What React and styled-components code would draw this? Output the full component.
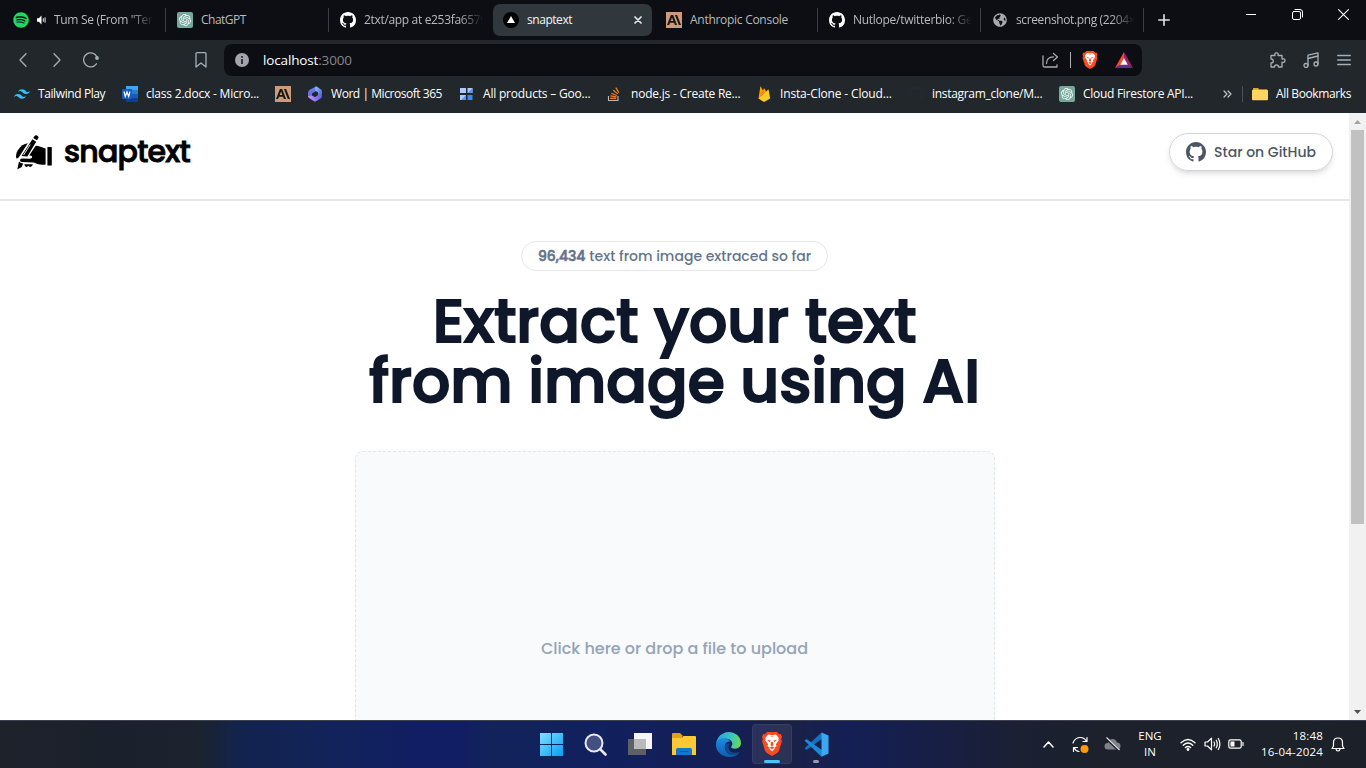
import React from "react";
import styled, { createGlobalStyle, css } from "styled-components";
import { FaSpotify, FaGlobeAmericas } from "react-icons/fa";
import { SiOpenai, SiTailwindcss, SiAnthropic } from "react-icons/si";

const Global = createGlobalStyle`
  * { box-sizing: border-box; }
  html, body { margin: 0; height: 100%; overflow: hidden; background: #fff; }
  svg { display: block; flex: none; }
`;

const ui = `"Segoe UI", "Open Sans", "Noto Sans", sans-serif`;
const geo = `Poppins, Inter, "Open Sans", sans-serif`;

const Screen = styled.div`
  width: 1366px;
  height: 768px;
  display: flex;
  flex-direction: column;
  overflow: hidden;
  font-family: ${ui};
`;

/* ---------- tab strip ---------- */
const TabStrip = styled.div`
  height: 40px;
  flex: none;
  display: flex;
  align-items: flex-start;
  background: #0d0e13;
  padding-left: 1px;
`;
const Tab = styled.div`
  width: ${(p) => p.$w || 163}px;
  height: 32px;
  margin-top: 4px;
  padding: 0 0 0 ${(p) => p.$pad || 12}px;
  display: flex;
  align-items: center;
  gap: ${(p) => p.$gap || 8}px;
  position: relative;
  color: ${(p) => (p.$active ? "#f4f6f7" : "#b9babd")};
  ${(p) =>
    p.$active
      ? css`
          background: #30383d;
          border-radius: 7px;
          width: 159px;
          margin-left: 2px;
          margin-right: 2px;
          padding-left: 10px;
        `
      : ""}
  ${(p) =>
    p.$line &&
    css`
      &::after {
        content: "";
        position: absolute;
        right: 0;
        top: 4px;
        width: 1px;
        height: 24px;
        background: #3b3e44;
      }
    `}
`;
const TabTitle = styled.span`
  flex: none;
  width: ${(p) => p.$w || 119}px;
  overflow: hidden;
  white-space: nowrap;
  font-size: 12px;
  line-height: 20px;
  letter-spacing: ${(p) => p.$ls ?? -0.28}px;
  ${(p) =>
    p.$fade &&
    css`
      mask-image: linear-gradient(90deg, #000 calc(100% - 24px), transparent);
    `}
`;
const NewTab = styled.div`
  width: 40px;
  height: 40px;
  display: grid;
  place-items: center;
`;
const WinButtons = styled.div`
  margin-left: auto;
  display: flex;
  height: 28px;
`;
const WinButton = styled.div`
  width: 46px;
  display: grid;
  place-items: center;
`;
const CloseTab = styled.div`
  margin-left: -20px;
`;

const Tile = styled.div`
  width: 16px;
  height: 16px;
  flex: none;
  display: grid;
  place-items: center;
  border-radius: ${(p) => p.$r || 0}px;
  background: ${(p) => p.$bg};
  color: ${(p) => p.$fg};
`;

/* ---------- toolbar ---------- */
const Toolbar = styled.div`
  height: 40px;
  flex: none;
  display: flex;
  align-items: center;
  background: #22272b;
  padding: 0 5px 0 6px;
`;
const ToolButton = styled.div`
  width: ${(p) => p.$w || 34}px;
  height: 32px;
  flex: none;
  display: grid;
  place-items: center;
`;
const Gap = styled.div`
  width: ${(p) => p.$w}px;
  flex: none;
`;
const AddressBar = styled.div`
  width: 918px;
  height: 32px;
  flex: none;
  border-radius: 8px;
  background: #0d0e13;
  display: flex;
  align-items: center;
  padding: 0 9px 0 11px;
`;
const Url = styled.div`
  margin-left: 14px;
  font-size: 13.5px;
  letter-spacing: -0.15px;
  color: #fff;
  span {
    color: #85878b;
  }
`;
const Rule = styled.div`
  width: 1px;
  height: ${(p) => p.$h}px;
  background: ${(p) => p.$c};
`;
const AddressTools = styled.div`
  margin-left: auto;
  display: flex;
  align-items: center;
`;

/* ---------- bookmarks ---------- */
const Bookmarks = styled.div`
  height: 33px;
  flex: none;
  display: flex;
  align-items: center;
  background: #22272b;
  padding: 0 0 5px 14px;
`;
const Bookmark = styled.div`
  width: ${(p) => p.$w}px;
  flex: none;
  display: flex;
  align-items: center;
  gap: 8px;
`;
const BookmarkLabel = styled.span`
  white-space: nowrap;
  font-size: 12px;
  line-height: 18px;
  color: #fff;
  letter-spacing: ${(p) => p.$ls}px;
`;

/* ---------- web page ---------- */
const Viewport = styled.div`
  height: 607px;
  flex: none;
  display: flex;
  overflow: hidden;
`;
const Page = styled.div`
  width: 1349px;
  height: 607px;
  overflow: hidden;
  display: flex;
  flex-direction: column;
  align-items: center;
  background: #fff;
  font-family: ${geo};
  font-weight: 500;
`;
const Header = styled.header`
  width: 100%;
  height: 88px;
  flex: none;
  border-bottom: 2px solid #e5e7eb;
  padding: 20px 16px 0;
  display: flex;
  justify-content: space-between;
  align-items: flex-start;
`;
const Brand = styled.div`
  display: flex;
  align-items: center;
  height: 38px;
  gap: 12px;
`;
const BrandName = styled.div`
  font-size: 30px;
  letter-spacing: -0.75px;
  line-height: 36px;
  color: #000;
  -webkit-text-stroke: 0.9px #000;
`;
const StarButton = styled.div`
  width: 164px;
  height: 38px;
  border: 1px solid #d1d5db;
  border-radius: 19px;
  box-shadow: 0 4px 6px -1px rgba(0, 0, 0, 0.1), 0 2px 4px -2px rgba(0, 0, 0, 0.1);
  display: flex;
  align-items: center;
  padding-left: 16px;
  gap: 8px;
  color: #4b5563;
  font-size: 14px;
  white-space: nowrap;
`;
const Pill = styled.div`
  margin-top: 40px;
  width: 307px;
  height: 30px;
  flex: none;
  border: 1px solid #e5e7eb;
  border-radius: 15px;
  display: flex;
  align-items: center;
  justify-content: center;
  gap: 4px;
  color: #64748b;
  font-size: 14px;
  white-space: nowrap;
  b {
    font-weight: 500;
    -webkit-text-stroke: 0.6px #64748b;
  }
`;
const Title = styled.h1`
  margin: 20px 0 0;
  font-size: 60px;
  line-height: 60px;
  font-weight: 500;
  color: #0f172a;
  text-align: center;
  -webkit-text-stroke: 2px #0f172a;
`;
const TitleLine = styled.span`
  display: block;
  white-space: nowrap;
`;
const DropZone = styled.div`
  margin-top: 40px;
  width: 640px;
  height: 394px;
  flex: none;
  border: 1px dashed #e2e5ea;
  border-radius: 8px;
  background: #f9fafc;
  color: #94a3b8;
  font-size: 16px;
  display: flex;
  align-items: center;
  justify-content: center;
`;
const ScrollBar = styled.div`
  width: 17px;
  height: 607px;
  background: #f1f1f1;
  display: flex;
  flex-direction: column;
  align-items: center;
`;
const ScrollArrow = styled.div`
  width: 17px;
  height: 17px;
  display: grid;
  place-items: center;
`;
const Thumb = styled.div`
  width: 13px;
  height: 394px;
  background: #c1c1c1;
  margin-bottom: auto;
`;

/* ---------- taskbar ---------- */
const Taskbar = styled.div`
  height: 48px;
  flex: none;
  display: flex;
  align-items: flex-start;
  border-top: 1px solid #3c4050;
  padding-left: 530px;
  background: linear-gradient(
    90deg,
    #1e222b 0,
    #1b212c 100px,
    #1b232e 200px,
    #12234e 240px,
    #11235a 330px,
    #111e63 420px,
    #111e63 460px,
    #11235a 490px,
    #11205e 600px,
    #141f55 740px,
    #1b2145 780px,
    #141f55 850px,
    #181f40 960px,
    #1b2033 1020px,
    #1c212c 1100px,
    #1c2129 1366px
  );
`;
const TaskSlot = styled.div`
  width: 44px;
  height: 46px;
  display: grid;
  place-items: center;
  position: relative;
`;
const TaskTile = styled.div`
  width: 40px;
  height: 40px;
  border-radius: 4px;
  display: grid;
  place-items: center;
  background: rgba(255, 255, 255, 0.08);
  box-shadow: inset 0 0 0 1px rgba(255, 255, 255, 0.06);
`;
const TaskMark = styled.div`
  position: absolute;
  bottom: 4px;
  left: ${(p) => (44 - p.$w) / 2}px;
  width: ${(p) => p.$w}px;
  height: 3px;
  border-radius: 2px;
  background: ${(p) => p.$c};
`;
const Tray = styled.div`
  margin-left: auto;
  display: flex;
  align-items: center;
  height: 46px;
  color: #fff;
  padding-right: 13px;
`;
const TraySlot = styled.div`
  width: ${(p) => p.$w}px;
  display: grid;
  place-items: center;
`;
const TrayText = styled.div`
  width: ${(p) => p.$w}px;
  font-size: 11.5px;
  line-height: 16px;
  text-align: ${(p) => p.$align || "center"};
  letter-spacing: ${(p) => p.$ls || 0}px;
  white-space: nowrap;
`;

/* ---------- drawings ---------- */
const Stroke = ({ w = 16, h = w, c = "#a5b0b6", sw = 1.3, children }) => (
  <svg width={w} height={h} viewBox={`0 0 ${w} ${h}`} fill="none" stroke={c} strokeWidth={sw} strokeLinecap="round" strokeLinejoin="round">
    {children}
  </svg>
);

const GithubMark = ({ size = 16, color = "currentColor" }) => (
  <svg width={size} height={size} viewBox="0 0 16 16" fill={color}>
    <path d="M8 0c4.42 0 8 3.58 8 8a8.013 8.013 0 0 1-5.45 7.59c-.4.08-.55-.17-.55-.38 0-.27.01-1.13.01-2.2 0-.75-.25-1.23-.54-1.48 1.78-.2 3.65-.88 3.65-3.95 0-.88-.31-1.59-.82-2.15.08-.2.36-1.02-.08-2.12 0 0-.67-.22-2.2.82-.64-.18-1.32-.27-2-.27-.68 0-1.36.09-2 .27-1.53-1.03-2.2-.82-2.2-.82-.44 1.1-.16 1.92-.08 2.12-.51.56-.82 1.28-.82 2.15 0 3.06 1.86 3.75 3.64 3.95-.23.2-.44.55-.51 1.07-.46.21-1.61.55-2.33-.66-.15-.24-.6-.83-1.23-.82-.67.01-.27.38.01.53.34.19.73.9.82 1.13.16.45.68 1.31 2.69.94 0 .67.01 1.3.01 1.49 0 .21-.15.45-.55.38A7.995 7.995 0 0 1 0 8c0-4.42 3.58-8 8-8Z" />
  </svg>
);

const OpenAiTile = () => (
  <Tile $bg="#74a99b" $fg="#fff" $r={2}><SiOpenai size={12} /></Tile>
);
const AnthropicTile = () => (
  <Tile $bg="#cf9a78" $fg="#191716"><SiAnthropic size={14} /></Tile>
);

const BraveLion = ({ w, h }) => (
  <svg width={w} height={h} viewBox="0 0 20 24">
    <path d="M5 0h10l2 2.2 1.8-.3L20 5l-.8 2 .7 2.200-3 9.800Q16 21 10 24 4 21 3.100 19L.1 9.200.8 7 0 5l1.200-3.100 1.800.3z" fill="#fb4a20" />
    <path d="M10 3.200l3.800-.7 3 3.600-.5 1.200.6 1-3 4 .6 1.700-2 1.800.2 1L10 19.600 7.300 16.800l.2-1-2-1.800.6-1.700-3-4 .6-1-.5-1.200 3-3.600z" fill="#fff" />
    <path d="M5 7.800l3.500.8-.8 1.600zM15 7.800l-3.500.8.8 1.600zM9 10h2l.5 3.200L10 14.200l-1.500-1zM7.600 15.500L10 14.600l2.400.9L10 17.200zM8.300 4.300h3.400L10 5z" fill="#fb4a20" />
  </svg>
);

const WordIcon = () => (
  <svg width="16" height="16" viewBox="0 0 16 16">
    <path d="M4 0h12v4H4z" fill="#41a5ee" />
    <path d="M4 4h12v4H4z" fill="#2b7cd3" />
    <path d="M4 8h12v4H4z" fill="#185abd" />
    <path d="M4 12h12v4H4z" fill="#103f91" />
    <rect y="3" width="10" height="10" rx=".8" fill="#185abd" />
    <path d="M2 5.500l1.300 5L5 6l1.700 4.500 1.300-5" stroke="#fff" strokeWidth="1.200" fill="none" />
  </svg>
);
const M365Icon = () => (
  <svg width="16" height="16" viewBox="0 0 16 16">
    <defs>
      <linearGradient id="m1" x1="0" y1="0" x2="1" y2="1"><stop stopColor="#9cc3f7" /><stop offset="1" stopColor="#3b5fe0" /></linearGradient>
      <linearGradient id="m2" x1="0" y1="0" x2="0" y2="1"><stop stopColor="#5b8cf0" /><stop offset="1" stopColor="#7a5ad8" /></linearGradient>
      <linearGradient id="m3" x1="0" y1="0" x2="1" y2="0"><stop stopColor="#c79af5" /><stop offset="1" stopColor="#5a5fe8" /></linearGradient>
    </defs>
    <path d="M9 .5L3 3.600Q1 4.800 1 7v3.500L5 11V7.500L9.500 4.800z" fill="url(#m2)" />
    <path d="M8.500 .5Q9.300 .2 10 .8l4 2.600Q15 4 15 5.500v5L11 9V6.500L8 4.600z" fill="url(#m1)" />
    <path d="M1 10q0 1.500 1.500 2.300L7 15.300q1 .6 2 0l4.500-2.800Q15 11.500 15 10l-.2-1L11 9l-3 2.300L5 9.500z" fill="url(#m3)" />
  </svg>
);
const GridIcon = () => (
  <svg width="16" height="16" viewBox="0 0 16 16">
    <path d="M1 2h6v5H1zM8.500 2h5v5h-5zM1 9h6v5H1z" fill="#aecbfa" />
    <path d="M8.500 9h5v5h-5z" fill="#4285f4" />
    <path d="M8.500 7l5-5v5zM2 14l5-5v5z" fill="#5b94f6" />
  </svg>
);
const StackIcon = () => (
  <svg width="16" height="16" viewBox="0 0 16 16" fill="none">
    <path d="M1.500 10v4.500h9.500V10" stroke="#bcbbbb" strokeWidth="1.100" />
    <path d="M3.200 12.300h6M3.400 9.900l6 .9M4.300 7.200l5.600 2.300M6.200 4.200l4.600 3.700M8.800 1.600l3 5" stroke="#f48024" strokeWidth="1.200" />
  </svg>
);
const FireIcon = () => (
  <svg width="16" height="16" viewBox="0 0 16 16">
    <path d="M2.500 12.500L4.300.8q.2-.6.6 0l2 3.700L8 2.600q.3-.4.600 0L13 12z" fill="#ffa000" />
    <path d="M2.500 12.500L7 4.600l2 3.700z" fill="#f57c00" />
    <path d="M2.500 12.500L12 3.700q.5-.4.700.2l1.400 8.600-5.500 3.200q-.6.300-1.200 0z" fill="#ffca28" />
  </svg>
);
const FolderIcon = () => (
  <svg width="16" height="14" viewBox="0 0 16 14">
    <path d="M1 1h5l1.500 1.500H15V6H1z" fill="#e5a50f" />
    <rect y="2.800" width="16" height="10.400" rx="1" fill="#ffd561" />
  </svg>
);
const HandLogo = () => (
  <svg width="36" height="35" viewBox="0 0 36 35">
    <path d="M18.400 1.200q1-1.600 2.600-.8l.7.500q1.400 1 .5 2.400L20.900 5.300l-3.700-2.400z" fill="#000" />
    <path d="M16.400 4.200l3.800 2.500-8.900 14.900-5.700-.6z" fill="#000" />
    <path d="M14.200 9.600L7.600 20" stroke="#fff" strokeWidth=".9" />
    <path d="M11.800 8.300L4 20.400 2.200 23 .4 23.400Q-.8 19.500 1.800 15.300 5.800 9 11.800 8.300z" fill="#000" />
    <path d="M19.500 11q1.300-.7 2.700 0l7.400 2.600v16q-4.600.6-8.100-.6l-3.700-1.600-12-.4Q4 26.700 4 25.200q0-1.600 2-1.800l8.200.3q1.900-.2 2-1.600-.1-1.700-1.800-1.700h-1.200z" fill="#000" />
    <rect x="31.400" y="12" width="4.400" height="18.500" rx=".6" fill="#000" />
    <path d="M3 26.600q1.400 2 4.200 2l-1.700 3.600Q3.200 33 1.300 34.600z" fill="#000" />
    <path d="M8.200 29.300h8.700q-.4 2.400-2.600 2.600-1.300 0-2-.8-.8 1-2 .8-1.700-.2-2.100-2.600z" fill="#000" />
  </svg>
);
const VsCodeIcon = () => (
  <svg width="25" height="25" viewBox="0 0 25 25">
    <path d="M.6 16.200L2.500 18 18.500 6.500 17.500 .4z" fill="#1272bd" />
    <path d="M.6 8.700L2.500 7l16 11.500-1 6.200z" fill="#1a8ad6" />
    <path d="M17.500 .4L24.500 3.500v18l-7 3.200z" fill="#3aa8f2" />
  </svg>
);
const EdgeIcon = () => (
  <svg width="25" height="25" viewBox="0 0 24 24">
    <defs>
      <linearGradient id="e1" x1="0" y1=".3" x2="1" y2=".4"><stop stopColor="#2b9fe0" /><stop offset=".55" stopColor="#36c2c8" /><stop offset="1" stopColor="#6bd853" /></linearGradient>
      <linearGradient id="e2" x1="0" y1="0" x2="0" y2="1"><stop stopColor="#1b8de0" /><stop offset="1" stopColor="#0f5cb0" /></linearGradient>
    </defs>
    <path d="M0 11.500C.8 4.800 6 0 12.200 0 19 0 24 4.800 24 10.600c0 3.300-2.500 5.400-5.500 5.400-2.600 0-4-.9-4-1.700 0-.7 1.200-1.200 1.200-3.100 0-2.600-2.700-4.800-6.400-4.800C4.500 6.400 1.200 8.500 0 11.500z" fill="url(#e1)" />
    <path d="M0 12c.4-4.500 4.500-6.500 8.500-6 2.600.3 4.500 1.600 5.600 3.300-3-.6-5.600 1.500-5.600 5.200 0 4.500 3.600 7.600 7.700 7.600 2.500 0 4.300-.7 5.800-1.800C20 22.700 16.400 24 12.500 24 5.500 24-.4 18.500 0 12z" fill="url(#e2)" />
    <path d="M8.500 14c0 5 3.800 8.200 8 8.200 2.500 0 4.500-1 5.900-2.500.3-.4 0-.9-.5-.6-4.700 2.200-9.600-.3-9.800-4.300-.1-1.700.6-2.700 1.600-3.500-2.700-.7-5.200-.2-5.200 2.700z" fill="#114a8b" />
  </svg>
);

const bookmarks = [
  { icon: <SiTailwindcss size={16} color="#38bdf8" />, label: "Tailwind Play", w: 108, ls: -0.4 },
  { icon: <WordIcon />, label: "class 2.docx - Micro...", w: 153, ls: -0.21 },
  { icon: <AnthropicTile />, label: "", w: 32 },
  { icon: <M365Icon />, label: "Word | Microsoft 365", w: 152, ls: -0.45 },
  { icon: <GridIcon />, label: "All products – Goo...", w: 148, ls: -0.2 },
  { icon: <StackIcon />, label: "node.js - Create Re...", w: 149, ls: -0.22 },
  { icon: <FireIcon />, label: "Insta-Clone - Cloud...", w: 152, ls: -0.16 },
  { icon: <GithubMark color="#24292e" />, label: "instagram_clone/M...", w: 151, ls: -0.3 },
  { icon: <OpenAiTile />, label: "Cloud Firestore API...", w: 163, ls: -0.28 },
];

export default function App() {
  return (
    <Screen>
      <Global />
      <TabStrip>
        <Tab $w={165} $line>
          <FaSpotify size={16} color="#1ed760" />
          <svg width="9" height="12" viewBox="0 0 10 12" fill="none" stroke="#fff">
            <path d="M0 4h2l3-3v10L2 8H0z" fill="#fff" stroke="none" />
            <path d="M7 4v4M9 3v6" />
          </svg>
          <TabTitle $w={100} $fade $ls={-0.3}>Tum Se (From "Teri</TabTitle>
        </Tab>
        <Tab $line $pad={11}>
          <OpenAiTile />
          <TabTitle $ls={-0.5}>ChatGPT</TabTitle>
        </Tab>
        <Tab $w={162} $pad={11}>
          <GithubMark color="#fff" />
          <TabTitle $fade $ls={-0.33}>2txt/app at e253fa6579</TabTitle>
        </Tab>
        <Tab $active>
          <svg width="16" height="16" viewBox="0 0 16 16"><circle cx="8" cy="8" r="8" fill="#000" /><path d="M8 4l4 7H4z" fill="#fff" /></svg>
          <TabTitle $ls={-0.45}>snaptext</TabTitle>
          <CloseTab>
            <Stroke w={8} c="#e8eaeb" sw={1.7}><path d="M1 1l6 6M7 1L1 7" /></Stroke>
          </CloseTab>
        </Tab>
        <Tab $line $w={164}>
          <AnthropicTile />
          <TabTitle>Anthropic Console</TabTitle>
        </Tab>
        <Tab $line $pad={11}>
          <GithubMark color="#fff" />
          <TabTitle $fade>Nutlope/twitterbio: Ge</TabTitle>
        </Tab>
        <Tab $line $gap={9}>
          <FaGlobeAmericas size={14} color="#a7a9ad" />
          <TabTitle $fade $ls={-0.38}>screenshot.png (2204×</TabTitle>
        </Tab>
        <NewTab><Stroke w={12} c="#e4e5e6" sw={1.6}><path d="M6 .8v10.400M.8 6h10.400" /></Stroke></NewTab>
        <WinButtons>
          <WinButton><Stroke w={10} c="#fff" sw={1}><path d="M0 5.500h10" /></Stroke></WinButton>
          <WinButton><Stroke w={11} c="#fff" sw={1}><rect x=".5" y="2.500" width="8" height="8" rx="1.500" /><path d="M3 .5h5Q10.500 .5 10.500 3v5" /></Stroke></WinButton>
          <WinButton><Stroke w={11} c="#fff" sw={1.100}><path d="M.6 .6l9.800 9.800M10.400 .6L.6 10.400" /></Stroke></WinButton>
        </WinButtons>
      </TabStrip>

      <Toolbar>
        <ToolButton><Stroke w={8} h={14}><path d="M7 .8L1 7l6 6.200" /></Stroke></ToolButton>
        <ToolButton><Stroke w={8} h={14}><path d="M1 .8L7 7l-6 6.200" /></Stroke></ToolButton>
        <ToolButton>
          <Stroke w={16}><path d="M13.400 11.800A7 7 0 1 1 14 5" /><circle cx="14" cy="6" r="1.900" fill="#a5b0b6" stroke="none" /></Stroke>
        </ToolButton>
        <Gap $w={76} />
        <ToolButton><Stroke w={12} h={16}><path d="M1 2q0-1.300 1.300-1.300h7.400Q11 .7 11 2v13l-5-4-5 4z" /></Stroke></ToolButton>
        <Gap $w={6} />
        <AddressBar>
          <svg width="14" height="14" viewBox="0 0 14 14"><circle cx="7" cy="7" r="7" fill="#a3a5a9" /><path d="M6 3h2v1.800H6zM6 6h2v5H6z" fill="#33363b" /></svg>
          <Url>localhost<span>:3000</span></Url>
          <AddressTools>
            <Stroke w={16} c="#a7aaae"><path d="M1 4v9.500Q1 15 2.500 15H15v-2M4.500 11.500Q4.500 5 11.500 4.800M11.500 1.500l4 3.400-4 3.600" /></Stroke>
            <Gap $w={12} /><Rule $h={16} $c="#aeb0b3" /><Gap $w={11} />
            <BraveLion w={16} h={18} />
            <Gap $w={17} />
            <svg width="18" height="16" viewBox="0 0 18 16">
              <path d="M9 0L0 16l6-3.500 3-5.500z" fill="#ff4724" />
              <path d="M9 0l9 16-6-3.500L9 7z" fill="#9e1f63" />
              <path d="M0 16h18l-6-3.800H6z" fill="#662d91" />
              <path d="M9 6l3.800 6.700H5.200z" fill="#fff" />
            </svg>
          </AddressTools>
        </AddressBar>
        <Gap $w={118} />
        <ToolButton>
          <Stroke w={17}><path d="M2 3.500h4q-.8-2.700 1.500-2.700T9 3.500h4v3.600q3-.8 3 1.500t-3 1.500V15H9.500q0-2.200-2-2.200T5.500 15H2v-4.200q2.300.1 2.300-1.900T2 7z" /></Stroke>
        </ToolButton>
        <ToolButton>
          <Stroke w={16}><path d="M5 13.500V3.200L15 .8V12" /><path d="M5 6.500L15 4" /><circle cx="3" cy="13.500" r="2" /><circle cx="13" cy="12" r="2" /></Stroke>
        </ToolButton>
        <ToolButton $w={32}><Stroke w={14} h={12}><path d="M.7 1.500h12.600M.7 6h12.600M.7 10.500h12.600" /></Stroke></ToolButton>
      </Toolbar>

      <Bookmarks>
        {bookmarks.map((b, i) => (
          <Bookmark key={i} $w={b.w}>
            {b.icon}
            {b.label && <BookmarkLabel $ls={b.ls}>{b.label}</BookmarkLabel>}
          </Bookmark>
        ))}
        <Gap $w={1} />
        <Stroke w={9} h={8} c="#c2c7ca" sw={1.200}><path d="M1 1l3 3-3 3M5 1l3 3-3 3" /></Stroke>
        <Gap $w={10} /><Rule $h={16} $c="#4c5257" /><Gap $w={9} />
        <Bookmark $w={106}>
          <FolderIcon />
          <BookmarkLabel $ls={-0.37}>All Bookmarks</BookmarkLabel>
        </Bookmark>
      </Bookmarks>

      <Viewport>
        <Page>
          <Header>
            <Brand><HandLogo /><BrandName>snaptext</BrandName></Brand>
            <StarButton><GithubMark size={20} />Star on GitHub</StarButton>
          </Header>
          <Pill><b>96,434</b> text from image extraced so far</Pill>
          <Title>
            <TitleLine>Extract your text</TitleLine>
            <TitleLine>from image using AI</TitleLine>
          </Title>
          <DropZone>Click here or drop a file to upload</DropZone>
        </Page>
        <ScrollBar>
          <ScrollArrow><svg width="7" height="4" viewBox="0 0 7 4"><path d="M0 4L3.500 0 7 4z" fill="#a3a3a3" /></svg></ScrollArrow>
          <Thumb />
          <ScrollArrow><svg width="7" height="4" viewBox="0 0 7 4"><path d="M0 0l3.500 4L7 0z" fill="#505050" /></svg></ScrollArrow>
        </ScrollBar>
      </Viewport>

      <Taskbar>
        <TaskSlot>
          <svg width="24" height="23" viewBox="0 0 24 23">
            <defs><linearGradient id="w1" x1="0" y1="0" x2="1" y2="1"><stop stopColor="#7fe0ff" /><stop offset="1" stopColor="#0a9bf5" /></linearGradient></defs>
            <path d="M0 0h11v11H0zM12 0h11v11H12zM0 12h11v11H0zM12 12h11v11H12z" fill="url(#w1)" />
          </svg>
        </TaskSlot>
        <TaskSlot>
          <svg width="24" height="23" viewBox="0 0 24 23" fill="none"><circle cx="10" cy="10" r="8.500" fill="#44507f" stroke="#e8eaf0" strokeWidth="2" /><path d="M16.500 16.500l5 5" stroke="#e8eaf0" strokeWidth="2.600" strokeLinecap="round" /></svg>
        </TaskSlot>
        <TaskSlot>
          <svg width="24" height="22" viewBox="0 0 24 22"><path d="M0 6h18v16H0z" fill="#5e6063" /><path d="M6 0h18v16H6z" fill="#f5f5f5" /><path d="M6 6h12v10H6z" fill="#b9babc" /></svg>
        </TaskSlot>
        <TaskSlot>
          <svg width="24" height="22" viewBox="0 0 24 22"><path d="M0 1q0-1 1-1h7l2.500 2.500V6H0z" fill="#e0a01a" /><path d="M0 5h10l1.500-2H23q1 0 1 1v18H0z" fill="#fcc934" /><path d="M4 22v-5.500Q4 15 5.500 15h13q1.500 0 1.500 1.500V22z" fill="#1477cf" /><path d="M8 18.500h8" stroke="#0f5ba8" /></svg>
        </TaskSlot>
        <TaskSlot><EdgeIcon /></TaskSlot>
        <TaskSlot>
          <TaskTile><BraveLion w={20} h={24} /></TaskTile>
          <TaskMark $w={16} $c="#4cc2ff" />
        </TaskSlot>
        <TaskSlot><VsCodeIcon /><TaskMark $w={6} $c="#9a9ca8" /></TaskSlot>
        <Tray>
          <TraySlot $w={32}><Stroke w={11} h={7} c="#fff" sw={1.500}><path d="M1 6l4.500-5L10 6" /></Stroke></TraySlot>
          <TraySlot $w={32}>
            <Stroke w={17} c="#fff" sw={1.200}><path d="M1 7Q3 1.500 8.500 1.500q4 0 6 4M15 1.500v4h-4M7 15.500Q3.500 15 2 11.500M1.500 15.500v-4h4" /><circle cx="12.500" cy="13" r="4" fill="#ff9a0a" stroke="none" /></Stroke>
          </TraySlot>
          <TraySlot $w={32}>
            <svg width="17" height="14" viewBox="0 0 17 14"><path d="M4 12.500q-3.500 0-3.500-3.300T4 6Q5 2 8.500 2t4.500 3.500q3.500.4 3.500 3.500t-3 3.500z" fill="#7e8288" /><path d="M2 1l13 12.500" stroke="#1c212c" strokeWidth="2.500" /><path d="M2.500 .5l13 12.500" stroke="#e5e6e8" strokeWidth="1.100" /></svg>
          </TraySlot>
          <Gap $w={6} />
          <TrayText $w={32}>ENG<br />IN</TrayText>
          <Gap $w={10} />
          <TraySlot $w={24}>
            <Stroke w={16} h={13} c="#fff" sw={1.300}><path d="M1 4.800q7-6.600 14 0M3.200 7.300q4.800-4.500 9.600 0M5.400 9.600q2.600-2.300 5.200 0" /><circle cx="8" cy="11.500" r=".8" fill="#fff" /></Stroke>
          </TraySlot>
          <TraySlot $w={24}>
            <Stroke w={17} h={14} c="#fff" sw={1.200}><path d="M1 5h2.500L7.500 1.200v11.600L3.500 9H1zM10 5q1.200 2 0 4M12.200 3.200q2.200 3.800 0 7.600M14.300 1.500q3.200 5.500 0 11" /></Stroke>
          </TraySlot>
          <TraySlot $w={24}>
            <Stroke w={16} h={10} c="#fff" sw={1.200}><rect x=".8" y=".8" width="12.400" height="8.400" rx="1.800" /><rect x="2.500" y="2.500" width="4" height="5" fill="#fff" stroke="none" /><path d="M15 3.500v3" /></Stroke>
          </TraySlot>
          <TrayText $w={75} $align="right" $ls={0.2}>18:48<br />16-04-2024</TrayText>
          <TraySlot $w={30}>
            <Stroke w={14} h={15} c="#fff" sw={1.200}><path d="M7 1Q2.500 1 2.500 5.500V9L1 11.500h12L11.500 9V5.500Q11.500 1 7 1zM5 12q.2 2 2 2t2-2" /></Stroke>
          </TraySlot>
        </Tray>
      </Taskbar>
    </Screen>
  );
}
